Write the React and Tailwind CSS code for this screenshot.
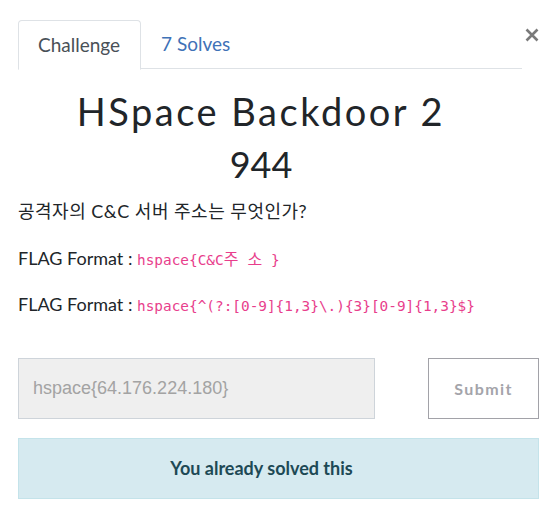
import React from "react";

const lato = { fontFamily: "Lato, 'Noto Sans CJK KR', sans-serif" };

export default function App() {
  return (
    <div
      className="w-[557px] h-[528px] bg-white text-[#212529] pl-[18px] pt-[20px]"
      style={lato}
    >
      {/* tabs + close */}
      <div className="flex items-start">
        <div className="flex w-[504px] h-[49px] border-b border-[#dee2e6]">
          <div className="h-[50px] -mb-px pl-[19px] pr-[20px] flex items-center border border-[#dee2e6] border-b-white rounded-t-[4px] bg-white text-[19px] text-[#495057]">
            Challenge
          </div>
          <div className="h-[49px] px-[20px] flex items-center text-[19px] text-[#3f72b7]">
            7 Solves
          </div>
        </div>
        <button className="ml-[1px] mt-[6px] w-[17px] h-[17px] flex items-center justify-center text-[#7a7a7a]">
          <svg width="14" height="14" viewBox="0 0 14 14">
            <path d="M1.5 1.5 L12.5 12.5 M12.5 1.5 L1.5 12.5" stroke="currentColor" strokeWidth="2.6" />
          </svg>
        </button>
      </div>

      {/* body */}
      <div className="w-[486px] text-center pt-[18px]">
        <h2
          className="text-[38px] leading-[48px] tracking-[2.5px] text-[#212529]"
          style={{ fontFamily: "Lato, sans-serif" }}
        >
          HSpace Backdoor 2
        </h2>
        <h3 className="text-[36px] leading-[44px] mt-[7px]">944</h3>
      </div>

      <div className="w-[521px] text-[18px] leading-[29px] mt-[11px]">
        <p className="mb-[18px] tracking-[0.5px]">공격자의 C&amp;C 서버 주소는 무엇인가?</p>
        <p className="mb-[15px]">
          FLAG Format :{" "}
          <code
            className="text-[14.4px] text-[#e83e8c]"
            style={{ fontFamily: "'DejaVu Sans Mono', 'Noto Sans CJK KR', monospace" }}
          >
            hspace{"{"}C&amp;C<span className="text-[16px] tracking-[9px]">주소</span>{"}"}
          </code>
        </p>
        <p>
          FLAG Format :{" "}
          <code
            className="text-[14.4px] text-[#e83e8c]"
            style={{ fontFamily: "'DejaVu Sans Mono', monospace" }}
          >
            {"hspace{^(?:[0-9]{1,3}\\.){3}[0-9]{1,3}$}"}
          </code>
        </p>
      </div>

      {/* submit row */}
      <div className="w-[521px] flex mt-[37px]">
        <div
          className="w-[357px] h-[61px] bg-[#efefef] border border-[#ced4da] flex items-center px-[14px] text-[18px] text-[#a3a3a3]"
          style={{ fontFamily: "'Liberation Sans', Arial, sans-serif" }}
        >
          hspace{"{"}64.176.224.180{"}"}
        </div>
        <button className="ml-auto w-[111px] h-[61px] border border-[#a2a2a8] bg-white text-[16px] font-bold tracking-[1.4px] text-[#a4a4aa]">
          Submit
        </button>
      </div>

      <div className="w-[521px] h-[61px] mt-[19px] bg-[#d6eaf0] border border-[#c4e3ea] flex items-center justify-center pr-[34px] text-[18px] font-bold text-[#1d4955]">
        You already solved this
      </div>
    </div>
  );
}
